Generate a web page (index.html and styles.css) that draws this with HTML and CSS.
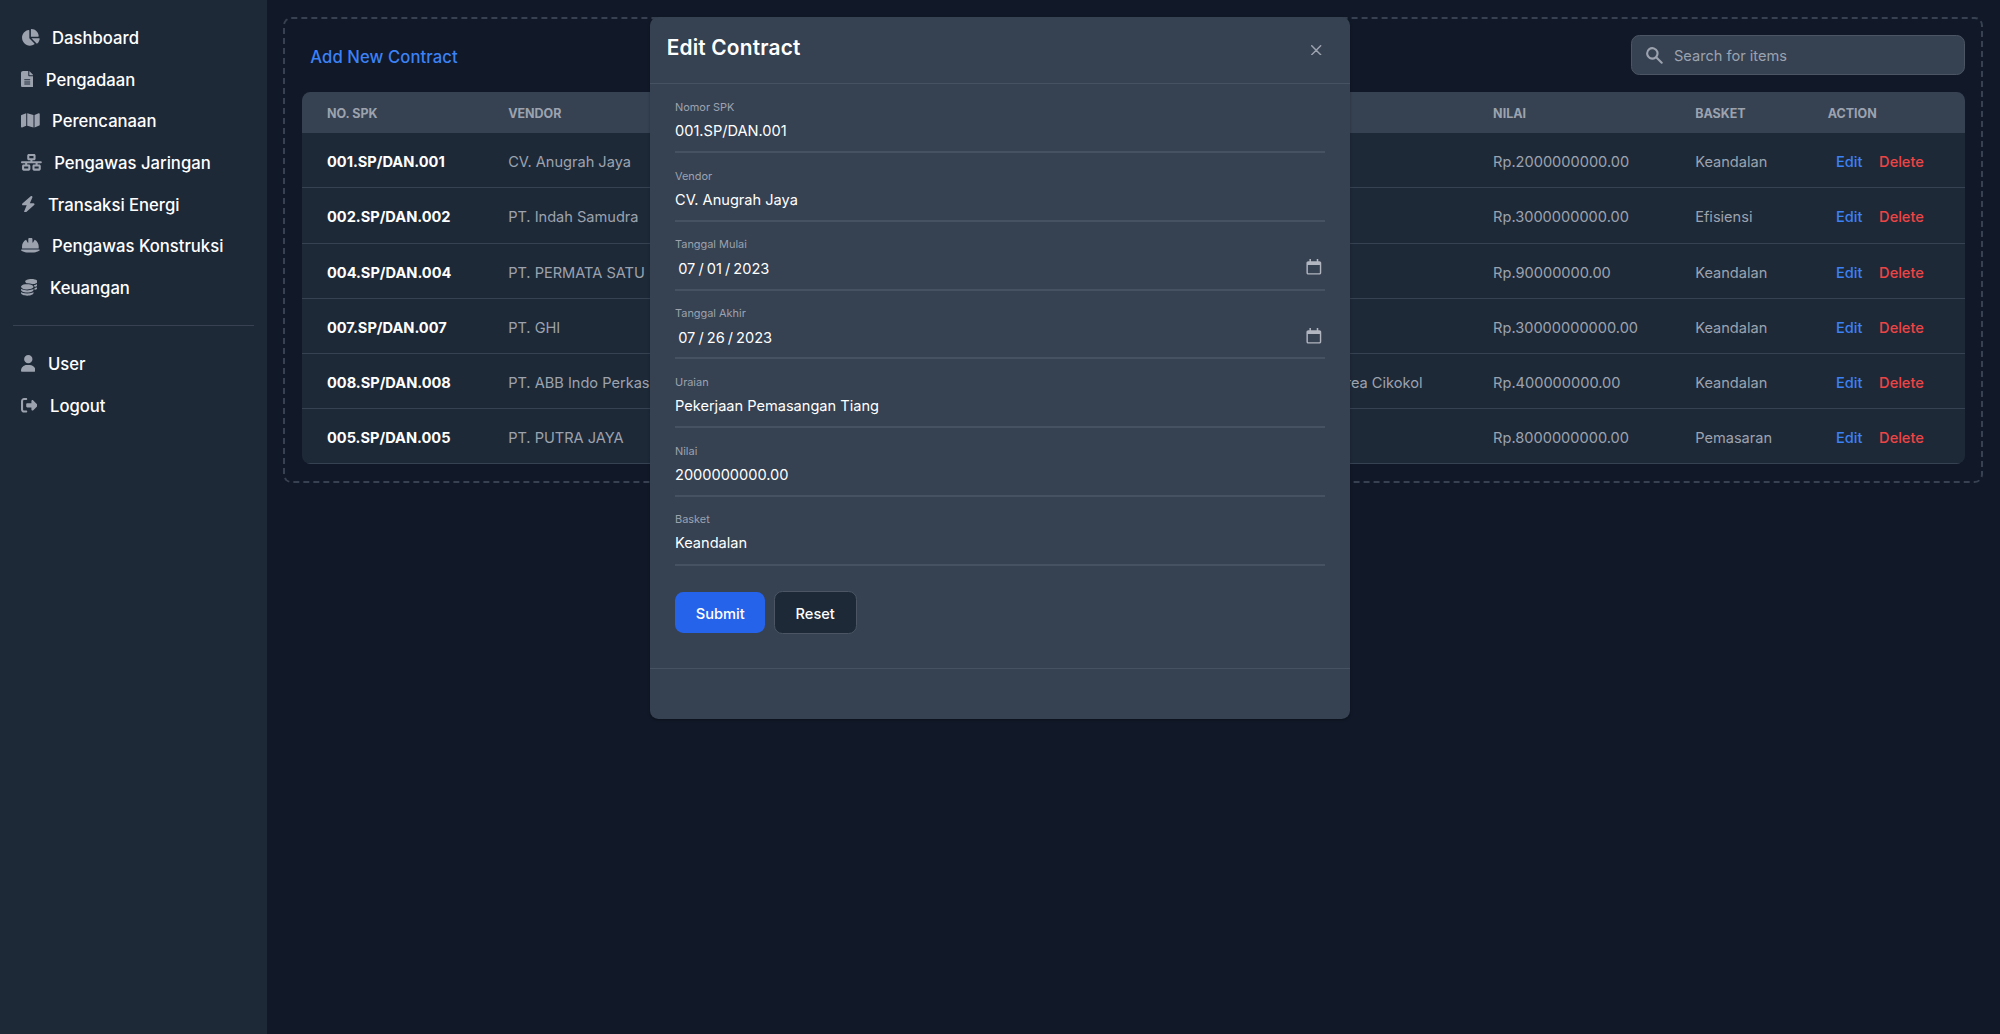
FILE: index.html
```html
<!DOCTYPE html>
<html lang="en">
<head>
<meta charset="utf-8">
<title>Edit Contract</title>
<link rel="stylesheet" href="styles.css">
</head>
<body>
<aside class="sidebar">
  <ul class="nav">
    <li><a class="nav-item" href="#"><svg class="nav-icon" viewBox="0 0 576 512"><path d="M304 240V16.6c0-9 7-16.6 16-16.6C443.7 0 544 100.3 544 224c0 9-7.6 16-16.6 16H304zM32 272C32 150.7 122.1 50.3 239 34.3c9.2-1.3 17 6.1 17 15.4V288L412.5 444.5c6.7 6.7 6.2 17.7-1.5 23.1C371.8 495.6 323.8 512 272 512C139.5 512 32 404.6 32 272zm526.4 16c9.3 0 16.6 7.8 15.4 17c-7.7 55.9-34.6 105.6-73.9 142.3c-6 5.6-15.4 5.2-21.2-.7L320 288H558.4z"/></svg><span>Dashboard</span></a></li>
    <li><a class="nav-item" href="#"><svg class="nav-icon" viewBox="0 0 384 512"><path d="M64 0C28.7 0 0 28.7 0 64V448c0 35.3 28.7 64 64 64H320c35.3 0 64-28.7 64-64V160H256c-17.7 0-32-14.3-32-32V0H64zM256 0V128H384L256 0zM112 256H272c8.8 0 16 7.2 16 16s-7.2 16-16 16H112c-8.8 0-16-7.2-16-16s7.2-16 16-16zm0 64H272c8.8 0 16 7.2 16 16s-7.2 16-16 16H112c-8.8 0-16-7.2-16-16s7.2-16 16-16zm0 64H272c8.8 0 16 7.2 16 16s-7.2 16-16 16H112c-8.8 0-16-7.2-16-16s7.2-16 16-16z"/></svg><span>Pengadaan</span></a></li>
    <li><a class="nav-item" href="#"><svg class="nav-icon" viewBox="0 0 576 512"><path d="M384 476.1L192 421.2V35.9L384 90.8V476.1zm32-1.2V88.4L543.1 37.5c15.8-6.3 32.9 5.3 32.9 22.3V394.6c0 9.8-6 18.6-15.1 22.3L416 474.8zM15.1 95.1L160 37.2V423.6L32.9 474.5C17.1 480.8 0 469.2 0 452.2V117.4c0-9.8 6-18.6 15.1-22.3z"/></svg><span>Perencanaan</span></a></li>
    <li><a class="nav-item" href="#"><svg class="nav-icon" viewBox="0 0 640 512"><path d="M256 64H384v64H256V64zM240 0c-26.5 0-48 21.5-48 48v96c0 26.5 21.5 48 48 48h48v32H32c-17.7 0-32 14.3-32 32s14.3 32 32 32h96v32H80c-26.5 0-48 21.5-48 48v96c0 26.5 21.5 48 48 48H240c26.5 0 48-21.5 48-48V368c0-26.5-21.5-48-48-48H192V288H448v32H400c-26.5 0-48 21.5-48 48v96c0 26.5 21.5 48 48 48H560c26.5 0 48-21.5 48-48V368c0-26.5-21.5-48-48-48H512V288h96c17.7 0 32-14.3 32-32s-14.3-32-32-32H352V192h48c26.5 0 48-21.5 48-48V48c0-26.5-21.5-48-48-48H240zM96 448V384H224v64H96zm320-64H544v64H416V384z"/></svg><span>Pengawas Jaringan</span></a></li>
    <li><a class="nav-item" href="#"><svg class="nav-icon" viewBox="0 0 448 512"><path d="M349.4 44.6c5.9-13.7 1.5-29.7-10.6-38.5s-28.6-8-39.9 1.8l-256 224c-10 8.8-13.6 22.9-8.9 35.3S50.7 288 64 288H175.5L98.6 467.4c-5.9 13.7-1.5 29.7 10.6 38.5s28.6 8 39.9-1.8l256-224c10-8.8 13.6-22.9 8.9-35.3s-16.6-20.7-30-20.7H272.5L349.4 44.6z"/></svg><span>Transaksi Energi</span></a></li>
    <li><a class="nav-item" href="#"><svg class="nav-icon" viewBox="0 0 576 512"><path d="M256 32c-17.7 0-32 14.3-32 32v2.3 99.6c0 5.6-4.5 10.1-10.1 10.1c-3.6 0-7-1.9-8.8-5.1L157.1 87C83 123.5 32 199.8 32 288v64H544l0-66.4c-.9-87.8-51.7-163.7-125.1-200.3l-48 83.9c-1.8 3.2-5.2 5.1-8.8 5.1c-5.6 0-10.1-4.5-10.1-10.1V66.3 64c0-17.7-14.3-32-32-32H256zM16.6 384C7.4 384 0 391.4 0 400.6c0 4.7 2 9.2 5.8 11.9C27.5 428.4 111.8 480 288 480s260.5-51.6 282.2-67.5c3.8-2.8 5.8-7.2 5.8-11.9c0-9.2-7.4-16.6-16.6-16.6H16.6z"/></svg><span>Pengawas Konstruksi</span></a></li>
    <li><a class="nav-item" href="#"><svg class="nav-icon" viewBox="0 0 512 512"><path d="M512 80c0 18-14.3 34.6-38.4 48c-29.1 16.1-72.5 27.5-122.3 30.9c-3.7-1.8-7.4-3.5-11.3-5C300.6 137.4 248.2 128 192 128c-8.3 0-16.4 .2-24.5 .6l-1.1-.6C142.3 114.6 128 98 128 80c0-44.2 86-80 192-80S512 35.8 512 80zM160.7 161.1c10.2-.7 20.7-1.1 31.3-1.1c62.2 0 117.4 12.3 152.5 31.4C369.3 204.9 384 221.7 384 240c0 4-.7 7.9-2.1 11.7c-4.6 13.2-17 25.3-35 35.5c0 0 0 0 0 0c-.1 .1-.3 .1-.4 .2l0 0 0 0c-.3 .2-.6 .3-.9 .5c-35 19.4-90.8 32-153.6 32c-59.6 0-112.9-11.3-148.2-29.1c-1.9-.9-3.7-1.9-5.5-2.9C14.3 274.6 0 258 0 240c0-34.8 53.4-64.5 128-75.4c10.5-1.5 21.4-2.7 32.7-3.5zM416 240c0-21.9-10.6-39.9-24.1-53.4c28.3-4.4 54.2-11.4 76.2-20.5c16.3-6.8 31.5-15.2 43.9-25.5V176c0 19.3-16.5 37.1-43.8 50.9c-14.6 7.4-32.4 13.7-52.4 18.5c.1-1.8 .2-3.5 .2-5.3zm-32 96c0 18-14.3 34.6-38.4 48c-1.8 1-3.6 1.9-5.5 2.9C304.9 404.7 251.6 416 192 416c-62.8 0-118.6-12.6-153.6-32C14.3 370.6 0 354 0 336V300.6c12.5 10.3 27.6 18.7 43.9 25.5C83.4 342.6 135.8 352 192 352s108.6-9.4 148.1-25.9c7.8-3.2 15.3-6.9 22.4-10.9c6.1-3.4 11.8-7.2 17.2-11.2c1.5-1.1 2.9-2.3 4.3-3.4V304v5.7V336zm32 0V304 278.1c19-4.2 36.5-9.5 52.1-16c16.3-6.8 31.5-15.2 43.9-25.5V272c0 10.5-5 21-14.9 30.9c-16.3 16.3-45 29.7-81.3 38.4c.1-1.7 .2-3.5 .2-5.3zM192 448c56.2 0 108.6-9.4 148.1-25.9c16.3-6.8 31.5-15.2 43.9-25.5V432c0 44.2-86 80-192 80S0 476.2 0 432V396.6c12.5 10.3 27.6 18.7 43.9 25.5C83.4 438.6 135.8 448 192 448z"/></svg><span>Keuangan</span></a></li>
  </ul>
  <ul class="nav nav-bottom">
    <li><a class="nav-item" href="#"><svg class="nav-icon" viewBox="0 0 448 512"><path d="M224 256A128 128 0 1 0 224 0a128 128 0 1 0 0 256zm-45.7 48C79.8 304 0 383.8 0 482.3C0 498.7 13.3 512 29.7 512H418.3c16.4 0 29.7-13.3 29.7-29.7C448 383.8 368.2 304 269.7 304H178.3z"/></svg><span>User</span></a></li>
    <li><a class="nav-item" href="#"><svg class="nav-icon" viewBox="0 0 512 512"><path d="M377.9 105.9L500.7 228.7c7.2 7.2 11.3 17.1 11.3 27.3s-4.1 20.1-11.3 27.3L377.9 406.1c-6.4 6.4-15 9.9-24 9.9c-18.7 0-33.9-15.2-33.9-33.9l0-62.1-128 0c-17.7 0-32-14.3-32-32l0-64c0-17.7 14.3-32 32-32l128 0 0-62.1c0-18.7 15.2-33.9 33.9-33.9c9 0 17.6 3.6 24 9.9zM160 96L96 96c-17.7 0-32 14.3-32 32l0 256c0 17.7 14.3 32 32 32l64 0c17.7 0 32 14.3 32 32s-14.3 32-32 32l-64 0c-53 0-96-43-96-96L0 128C0 75 43 32 96 32l64 0c17.7 0 32 14.3 32 32s-14.3 32-32 32z"/></svg><span>Logout</span></a></li>
  </ul>
</aside>

<main class="main">
  <section class="panel">
    <div class="toolbar">
      <a class="add-link" href="#">Add New Contract</a>
      <label class="search">
        <svg class="search-icon" viewBox="0 0 20 20"><path fill-rule="evenodd" clip-rule="evenodd" d="M8 4a4 4 0 100 8 4 4 0 000-8zM2 8a6 6 0 1110.89 3.476l4.817 4.817a1 1 0 01-1.414 1.414l-4.816-4.816A6 6 0 012 8z"/></svg>
        <input class="search-input" type="text" placeholder="Search for items">
      </label>
    </div>
    <table class="table">
      <colgroup>
        <col class="c-spk"><col class="c-vendor"><col class="c-uraian"><col class="c-nilai"><col class="c-basket"><col class="c-action">
      </colgroup>
      <thead>
        <tr><th>No. SPK</th><th>Vendor</th><th>Uraian</th><th>Nilai</th><th>Basket</th><th>Action</th></tr>
      </thead>
      <tbody>
        <tr><td class="spk">001.SP/DAN.001</td><td>CV. Anugrah Jaya</td><td>Pekerjaan Pemasangan Tiang</td><td>Rp.2000000000.00</td><td>Keandalan</td><td class="actions"><a class="edit" href="#">Edit</a><a class="delete" href="#">Delete</a></td></tr>
        <tr><td class="spk">002.SP/DAN.002</td><td>PT. Indah Samudra</td><td>Pekerjaan Penggantian Trafo</td><td>Rp.3000000000.00</td><td>Efisiensi</td><td class="actions"><a class="edit" href="#">Edit</a><a class="delete" href="#">Delete</a></td></tr>
        <tr><td class="spk">004.SP/DAN.004</td><td>PT. PERMATA SATU IND</td><td>Pekerjaan Instalasi Meter</td><td>Rp.90000000.00</td><td>Keandalan</td><td class="actions"><a class="edit" href="#">Edit</a><a class="delete" href="#">Delete</a></td></tr>
        <tr><td class="spk">007.SP/DAN.007</td><td>PT. GHI</td><td>Pekerjaan Jaringan Baru</td><td>Rp.30000000000.00</td><td>Keandalan</td><td class="actions"><a class="edit" href="#">Edit</a><a class="delete" href="#">Delete</a></td></tr>
        <tr><td class="spk">008.SP/DAN.008</td><td>PT. ABB Indo Perkasa</td><td>Pekerjaan Pemeliharaan Jaringan Distribusi Area Cikokol</td><td>Rp.400000000.00</td><td>Keandalan</td><td class="actions"><a class="edit" href="#">Edit</a><a class="delete" href="#">Delete</a></td></tr>
        <tr><td class="spk">005.SP/DAN.005</td><td>PT. PUTRA JAYA</td><td>Pekerjaan Gardu Distribusi</td><td>Rp.8000000000.00</td><td>Pemasaran</td><td class="actions"><a class="edit" href="#">Edit</a><a class="delete" href="#">Delete</a></td></tr>
      </tbody>
    </table>
  </section>
</main>

<div class="overlay">
  <div class="modal">
    <header class="modal-head">
      <h3 class="modal-title">Edit Contract</h3>
      <button class="modal-close" type="button" aria-label="Close">
        <svg class="close-icon" viewBox="0 0 14 14"><path d="m1 1 6 6m0 0 6 6M7 7l6-6M7 7l-6 6"/></svg>
      </button>
    </header>
    <form class="modal-body">
      <div class="field"><input class="field-input" type="text" value="001.SP/DAN.001"><label class="field-label">Nomor SPK</label></div>
      <div class="field"><input class="field-input" type="text" value="CV. Anugrah Jaya"><label class="field-label">Vendor</label></div>
      <div class="field"><input class="field-input field-date" type="text" value="07 / 01 / 2023"><label class="field-label">Tanggal Mulai</label>
        <svg class="cal-icon" viewBox="0 0 16 16"><path d="M4 1h1.400v2h5.200V1H12v2h1c1 0 1.700.7 1.700 1.700v8.600c0 1-.7 1.700-1.700 1.700H3c-1 0-1.700-.7-1.700-1.700V4.700C1.300 3.700 2 3 3 3h1zM2.600 6.300v7c0 .3.1.4.4.4h10c.3 0 .4-.1.4-.4v-7z"/></svg></div>
      <div class="field"><input class="field-input field-date" type="text" value="07 / 26 / 2023"><label class="field-label">Tanggal Akhir</label>
        <svg class="cal-icon" viewBox="0 0 16 16"><path d="M4 1h1.400v2h5.200V1H12v2h1c1 0 1.700.7 1.700 1.700v8.600c0 1-.7 1.700-1.700 1.700H3c-1 0-1.700-.7-1.700-1.700V4.700C1.300 3.700 2 3 3 3h1zM2.600 6.300v7c0 .3.1.4.4.4h10c.3 0 .4-.1.4-.4v-7z"/></svg></div>
      <div class="field"><input class="field-input" type="text" value="Pekerjaan Pemasangan Tiang"><label class="field-label">Uraian</label></div>
      <div class="field"><input class="field-input" type="text" value="2000000000.00"><label class="field-label">Nilai</label></div>
      <div class="field"><input class="field-input" type="text" value="Keandalan"><label class="field-label">Basket</label></div>
      <div class="form-actions">
        <button class="btn btn-primary" type="button">Submit</button>
        <button class="btn btn-secondary" type="button">Reset</button>
      </div>
    </form>
    <footer class="modal-foot"></footer>
  </div>
</div>
</body>
</html>
```

FILE: styles.css
```css
html { font-size: 16.6667px; }
* { box-sizing: border-box; }
body {
  margin: 0;
  min-height: 100vh;
  display: flex;
  overflow: hidden;
  background: #111827;
  color: #fff;
  font-family: Inter, "Liberation Sans", sans-serif;
  line-height: 1.5;
  position: relative;
}
a { text-decoration: none; }
ul { list-style: none; margin: 0; padding: 0; }

/* Sidebar */
.sidebar {
  flex: 0 0 16rem;
  background: #1e2938;
  padding: 1rem .75rem;
}
.nav-bottom {
  margin-top: 1rem;
  padding-top: 1rem;
  border-top: 1px solid #374151;
}
.nav-item {
  display: flex;
  align-items: center;
  gap: .75rem;
  height: 2.5rem;
  padding: 0 .5rem;
  color: #fff;
  font-size: 1rem;
  font-weight: 500;
  line-height: 1.5rem;
}
.nav-item span { padding-top: .125rem; }
.nav-icon { height: 1rem; width: auto; fill: #9ca3af; flex: none; }

/* Main */
.main { flex: 1; min-width: 0; padding: 1rem; }
.panel {
  border: .125rem dashed #374151;
  border-radius: .5rem;
  padding: 1rem;
}
.toolbar {
  display: flex;
  align-items: center;
  justify-content: space-between;
  padding-bottom: 1rem;
}
.add-link {
  padding: .3rem 0 0 .5rem;
  color: #3b82f6;
  font-size: 1rem;
  font-weight: 500;
  letter-spacing: .005rem;
}
.search { position: relative; display: block; width: 20rem; }
.search-icon {
  position: absolute;
  left: .75rem;
  top: .5625rem;
  width: 1.25rem;
  height: 1.25rem;
  fill: #9ca3af;
}
.search-input {
  display: block;
  width: 100%;
  height: 2.375rem;
  padding: .125rem .75rem 0 2.5rem;
  background: #364152;
  border: 1px solid #4b5563;
  border-radius: .5rem;
  color: #fff;
  font: inherit;
  font-size: .875rem;
}
.search-input::placeholder { color: #9ca3af; opacity: 1; }

/* Table */
.table {
  width: 100%;
  table-layout: fixed;
  border-collapse: separate;
  border-spacing: 0;
  border-radius: .5rem;
  overflow: hidden;
  font-size: .875rem;
  line-height: 1.25rem;
  color: #9ca3af;
}
.c-spk { width: 10.87rem; }
.c-vendor { width: 31.5rem; }
.c-nilai { width: 12.125rem; }
.c-basket { width: 7.95rem; }
.c-action { width: 9.72rem; }
thead tr { height: 2.5rem; }
tbody tr { height: 3.3125rem; }
th {
  padding: .25rem 1.5rem 0;
  background: #364152;
  color: #9ca3af;
  font-size: .75rem;
  font-weight: 700;
  text-align: left;
  text-transform: uppercase;
  white-space: nowrap;
}
td {
  padding: .28rem 1.5rem 0;
  background: #1e2938;
  border-bottom: 1px solid #364152;
  white-space: nowrap;
}
.spk { color: #fff; font-weight: 700; }
.actions a { padding: 0 .5rem; font-weight: 500; }
.edit { color: #3b82f6; }
.delete { color: #ef4444; }

/* Modal */
.overlay {
  position: absolute;
  inset: 0;
  display: flex;
  justify-content: center;
  align-items: flex-start;
  padding: 1rem;
}
.modal {
  width: 42rem;
  background: #364152;
  border-radius: .5rem;
  box-shadow: 0 1px 3px rgba(0, 0, 0, .3);
}
.modal-head {
  display: flex;
  align-items: flex-start;
  justify-content: space-between;
  height: 4.0625rem;
  padding: 1rem;
  border-bottom: 1px solid #465161;
}
.modal-title {
  margin: 0;
  font-size: 1.25rem;
  line-height: 1.75rem;
  font-weight: 600;
  letter-spacing: .012rem;
  color: #fff;
}
.modal-close {
  display: flex;
  align-items: center;
  justify-content: center;
  width: 2rem;
  height: 2rem;
  padding: 0;
  border: 0;
  background: none;
}
.close-icon {
  width: .625rem;
  height: .625rem;
  fill: none;
  stroke: #9ca3af;
  stroke-width: 2;
  stroke-linecap: round;
  stroke-linejoin: round;
}
.modal-body { padding: 1.5rem; }
.field { position: relative; margin-bottom: 1.5rem; }
.field-input {
  display: block;
  width: 100%;
  height: 2.625rem;
  padding: .0625rem 0 0;
  background: transparent;
  border: 0;
  border-bottom: .125rem solid #465161;
  outline: 0;
  color: #fff;
  font: inherit;
  font-size: .875rem;
}
.field-date { padding: .1875rem 0 0 .1875rem; word-spacing: -1px; }
.field-label {
  position: absolute;
  left: 0;
  top: -.75rem;
  font-size: .65625rem;
  line-height: 1.25rem;
  color: #9ca3af;
}
.cal-icon {
  position: absolute;
  right: .125rem;
  top: .6875rem;
  width: 1.0625rem;
  height: 1.0625rem;
  fill: #b0b5bf;
}
.form-actions { display: flex; align-items: center; gap: .5rem; margin-bottom: .5rem; }
.btn {
  padding: .25rem 1.25rem 0;
  border-radius: .5rem;
  color: #fff;
  font: inherit;
  font-size: .875rem;
  font-weight: 500;
}
.btn-primary { height: 2.5rem; background: #2563eb; border: 0; }
.btn-secondary { height: 2.625rem; background: #1e2938; border: 1px solid #4b5563; }
.modal-foot { height: 3.0625rem; border-top: 1px solid #465161; }
```
